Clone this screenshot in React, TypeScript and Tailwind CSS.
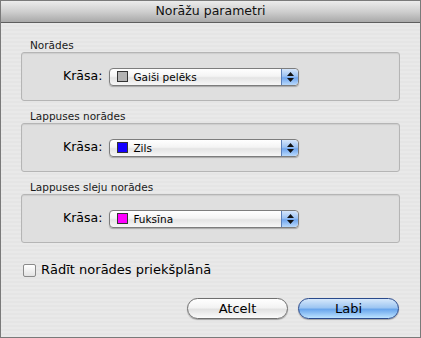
import { useState } from "react";

const font = { fontFamily: '"DejaVu Sans", "Liberation Sans", sans-serif' };

type Group = { title: string; color: string; name: string };

const groups: Group[] = [
  { title: "Norādes", color: "#b3b3b3", name: "Gaiši pelēks" },
  { title: "Lappuses norādes", color: "#1500ff", name: "Zils" },
  { title: "Lappuses sleju norādes", color: "#ff00ff", name: "Fuksīna" },
];

const Stepper = () => (
  <div className="flex h-full w-[17px] flex-col items-center justify-center gap-[2px] rounded-r-[4px] border-l border-[#5b7fb8] bg-[linear-gradient(#d5e5fa_0%,#9cc2f3_45%,#6fa5ee_55%,#b9d9fb_100%)]">
    <svg width="7" height="4" viewBox="0 0 7 4">
      <path d="M3.5 0 L7 4 L0 4 Z" fill="#111" />
    </svg>
    <svg width="7" height="4" viewBox="0 0 7 4">
      <path d="M0 0 L7 0 L3.5 4 Z" fill="#111" />
    </svg>
  </div>
);

const ColorSelect = ({ color, name }: { color: string; name: string }) => (
  <div className="flex h-[18px] w-[190px] items-center overflow-hidden rounded-[4px] border border-[#7d7d7d] bg-[linear-gradient(#ffffff_0%,#f4f4f4_45%,#e4e4e4_55%,#f7f7f7_100%)] shadow-[0_1px_1px_rgba(0,0,0,0.25)]">
    <div className="flex flex-1 items-center gap-[5px] pl-[7px]">
      <span
        className="h-[11px] w-[11px] border border-[#333]"
        style={{ backgroundColor: color }}
      />
      <span className="text-[10.5px] leading-[14px] text-black">{name}</span>
    </div>
    <Stepper />
  </div>
);

const GroupBox = ({ group }: { group: Group }) => (
  <div className="flex flex-col">
    <div className="h-[14px] pl-[9px] text-[10.5px] leading-[14px] text-[#1a1a1a]">
      {group.title}
    </div>
    <div className="flex h-[49px] items-center gap-[7px] rounded-[3px] border border-[#b5b5b5] bg-[#dfdfdf] pl-[41px] shadow-[inset_0_1px_1px_rgba(0,0,0,0.08)]">
      <span className="text-[12.5px] text-black">Krāsa:</span>
      <ColorSelect color={group.color} name={group.name} />
    </div>
  </div>
);

const App = () => {
  const [front, setFront] = useState(false);
  return (
    <div
      style={font}
      className="flex h-[338px] w-[421px] flex-col overflow-hidden border border-[#7a7a7a] bg-[#e8e8e8]"
    >
      <div className="flex h-[22px] shrink-0 items-center justify-center border-b border-[#5e5e5e] bg-[linear-gradient(#ececec,#cfcfcf_50%,#a9a9a9)] text-[12.5px] text-[#111]">
        Norāžu parametri
      </div>
      <div className="flex flex-1 flex-col bg-[repeating-linear-gradient(0deg,#e9e9e9_0px,#e9e9e9_2px,#e5e5e5_2px,#e5e5e5_4px)] px-[20px] pt-[15px]">
        <div className="flex flex-col gap-[8px]">
          {groups.map((g) => (
            <GroupBox key={g.title} group={g} />
          ))}
        </div>
        <label className="mt-[20px] flex h-[14px] cursor-pointer items-center gap-[5px] pl-[2px]">
          <span
            onClick={() => setFront(!front)}
            className="flex h-[13px] w-[13px] items-center justify-center rounded-[2px] border border-[#8a8a8a] bg-[linear-gradient(#ffffff,#e3e3e3)]"
          >
            {front && <span className="text-[10px] leading-none">✓</span>}
          </span>
          <span className="text-[13px] text-black">Rādīt norādes priekšplānā</span>
        </label>
        <div className="mt-[21px] flex justify-end gap-[10px] pr-[1px]">
          <button className="h-[21px] w-[101px] rounded-full border border-[#6f6f6f] bg-[linear-gradient(#ffffff_0%,#f3f3f3_45%,#e2e2e2_55%,#fbfbfb_100%)] text-[13px] leading-none text-black shadow-[0_1px_1px_rgba(0,0,0,0.3)]">
            Atcelt
          </button>
          <button className="h-[21px] w-[101px] rounded-full border border-[#2a4a8c] bg-[linear-gradient(#d6e8fb_0%,#9ec6f2_45%,#6aa6ec_55%,#bde3ff_100%)] text-[13px] leading-none text-black shadow-[0_1px_1px_rgba(0,0,0,0.3)]">
            Labi
          </button>
        </div>
      </div>
    </div>
  );
};

export default App;
